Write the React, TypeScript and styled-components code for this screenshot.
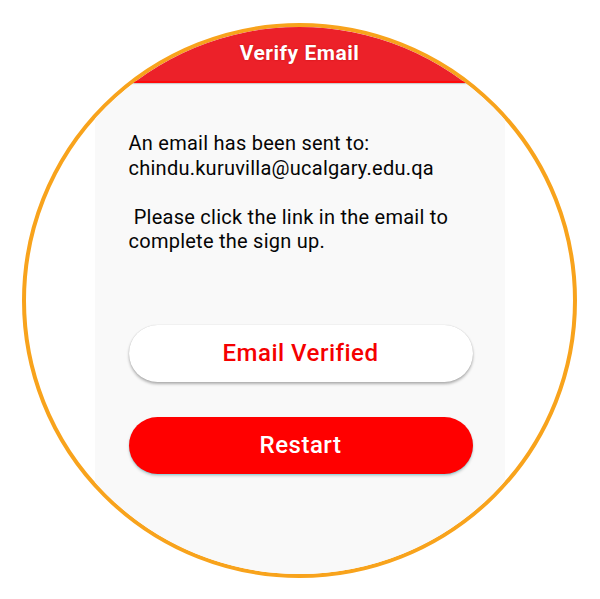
import styled, { createGlobalStyle } from 'styled-components';

const GlobalStyle = createGlobalStyle`
	html,
	body {
		margin: 0;
		padding: 0;
		background: #fff;
	}
	* {
		box-sizing: border-box;
	}
`;

const Page = styled.div`
	width: 600px;
	height: 599px;
	padding: 23px 0 0 22px;
	background: #fff;
	font-family: Roboto, 'Liberation Sans', sans-serif;
	overflow: hidden;
`;

const CircleFrame = styled.div`
	width: 555px;
	height: 555px;
	border: 4px solid #f8a31c;
	border-radius: 50%;
	overflow: hidden;
	background: #fff;
	display: flex;
	justify-content: center;
`;

const PhoneScreen = styled.div`
	width: 410px;
	height: 100%;
	background: #f9f9f9;
	display: flex;
	flex-direction: column;
`;

const HeaderBar = styled.div`
	height: 56px;
	flex-shrink: 0;
	background: #ec2129;
	border-bottom: 2px solid #ff0a0a;
	box-shadow: 0 1px 1px rgba(0, 0, 0, 0.18);
	display: flex;
	align-items: center;
	justify-content: center;
	padding-bottom: 3px;
`;

const HeaderTitle = styled.span`
	color: #fff;
	font-size: 21px;
	font-weight: 700;
	letter-spacing: 0.5px;
	text-shadow: 0 0 2px rgba(180, 0, 0, 0.6);
`;

const Body = styled.div`
	display: flex;
	flex-direction: column;
	padding: 48px 32px 0 34px;
`;

const Message = styled.p`
	margin: 0;
	color: #050505;
	font-size: 20px;
	letter-spacing: 0.25px;
	line-height: 24.5px;
	white-space: pre-wrap;
`;

const ButtonStack = styled.div`
	display: flex;
	flex-direction: column;
	gap: 35px;
	margin-top: 71px;
`;

const PillButton = styled.button<{ $primary?: boolean }>`
	width: 344px;
	height: 57px;
	border: none;
	border-radius: 29px;
	background: ${(p) => (p.$primary ? '#ff0000' : '#ffffff')};
	color: ${(p) => (p.$primary ? '#ffffff' : '#f50000')};
	font-family: Roboto, 'Liberation Sans', sans-serif;
	font-size: 24px;
	font-weight: 500;
	letter-spacing: 0.5px;
	box-shadow: ${(p) =>
		p.$primary
			? '0 1px 1px rgba(120, 220, 230, 0.7), 0 2px 3px rgba(0, 0, 0, 0.18)'
			: '0 2px 3px rgba(0, 0, 0, 0.3), 0 0 1px rgba(0, 0, 0, 0.2)'};
	cursor: pointer;
`;

export default function App() {
	return (
		<>
			<GlobalStyle />
			<Page>
				<CircleFrame>
					<PhoneScreen>
						<HeaderBar>
							<HeaderTitle>Verify Email</HeaderTitle>
						</HeaderBar>
						<Body>
							<Message>
								{'An email has been sent to:\nchindu.kuruvilla@ucalgary.edu.qa\n\n Please click the link in the email to\ncomplete the sign up.'}
							</Message>
							<ButtonStack>
								<PillButton>Email Verified</PillButton>
								<PillButton $primary>Restart</PillButton>
							</ButtonStack>
						</Body>
					</PhoneScreen>
				</CircleFrame>
			</Page>
		</>
	);
}
